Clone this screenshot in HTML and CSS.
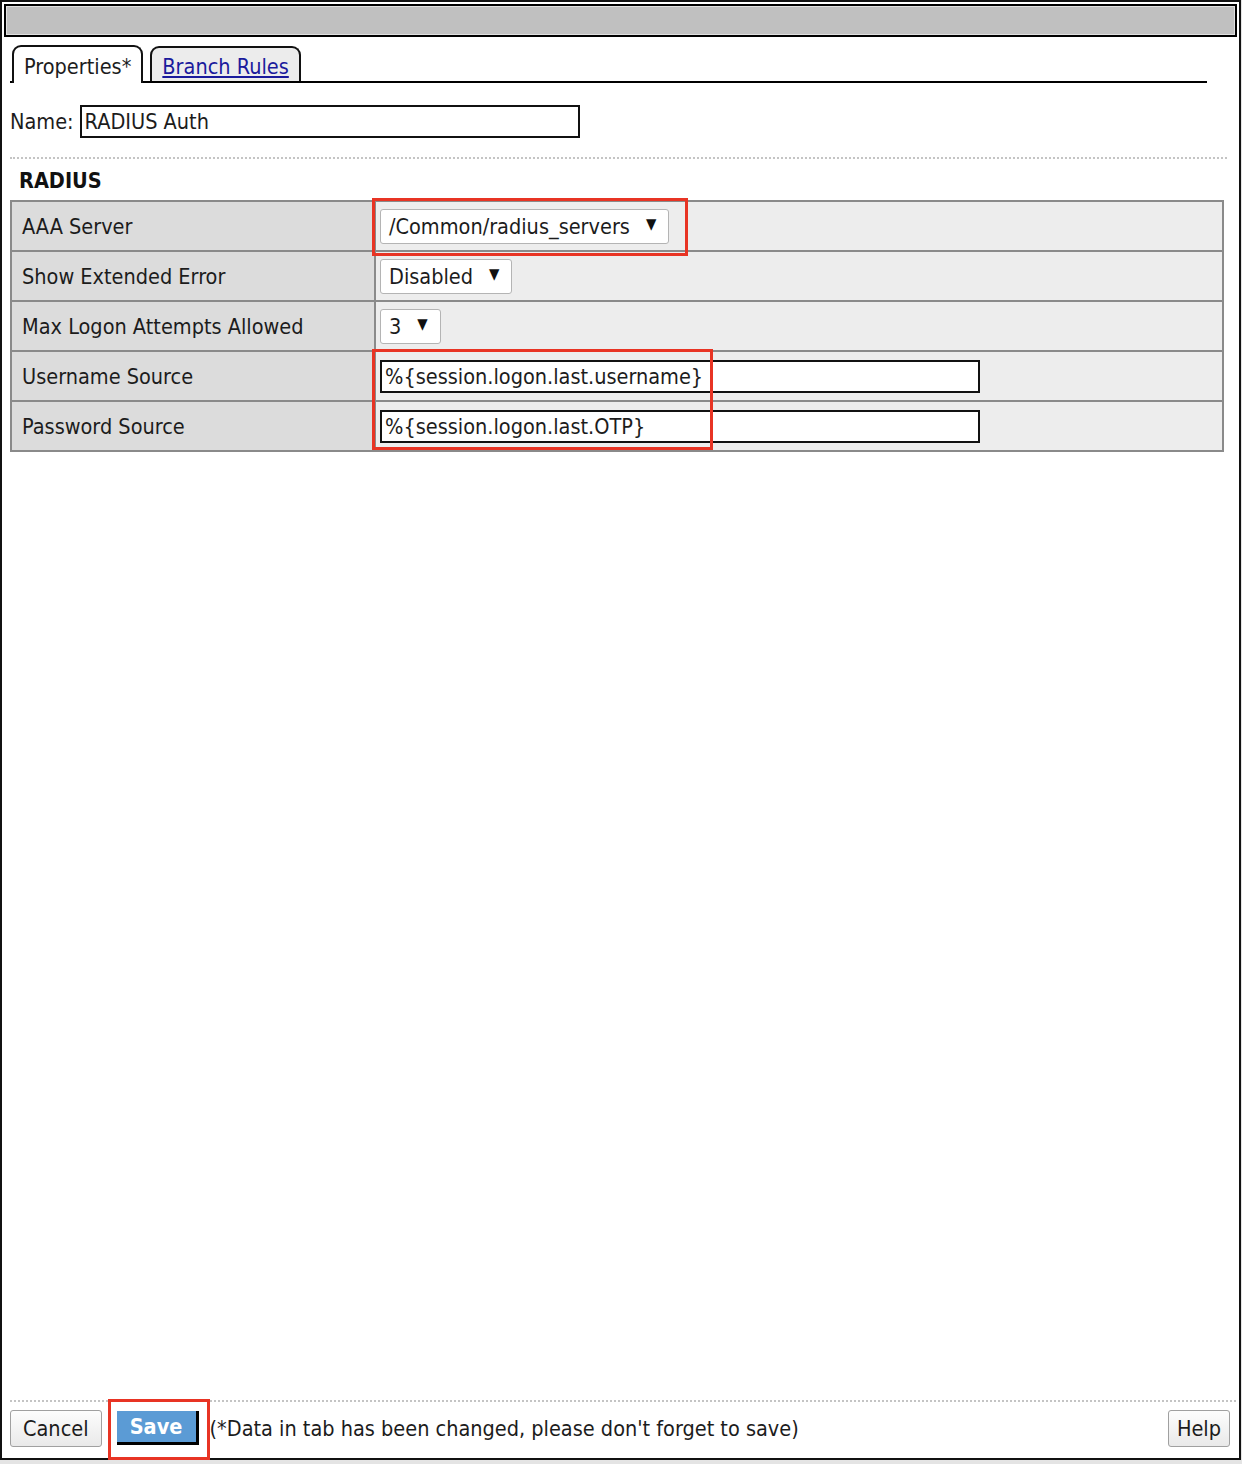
FILE: index.html
```html
<!DOCTYPE html>
<html lang="en">
<head>
    <meta charset="UTF-8">
    <title>RADIUS Auth - Properties</title>
    <link rel="stylesheet" href="styles.css">
</head>
<body>
    <div class="window">
        <div class="titlebar"></div>

        <div class="panel">
            <!-- Pestañas -->
            <div class="tabs">
                <span class="tab tab-active">Properties*</span>
                <span class="tab"><a href="#">Branch Rules</a></span>
            </div>

            <div class="name-row">
                <label for="name">Name:</label>
                <input type="text" id="name" class="text-field name-field" value="RADIUS Auth">
            </div>

            <div class="dotted"></div>

            <h2 class="section-title">RADIUS</h2>

            <div class="props-wrap">
                <table class="props">
                    <tr>
                        <td class="prop-label">AAA Server</td>
                        <td class="prop-value">
                            <span class="select-box">/Common/radius_servers <span class="arrow">&#9660;</span></span>
                        </td>
                    </tr>
                    <tr>
                        <td class="prop-label">Show Extended Error</td>
                        <td class="prop-value">
                            <span class="select-box">Disabled <span class="arrow">&#9660;</span></span>
                        </td>
                    </tr>
                    <tr>
                        <td class="prop-label">Max Logon Attempts Allowed</td>
                        <td class="prop-value">
                            <span class="select-box">3 <span class="arrow">&#9660;</span></span>
                        </td>
                    </tr>
                    <tr>
                        <td class="prop-label">Username Source</td>
                        <td class="prop-value">
                            <input type="text" class="text-field source-field" value="%{session.logon.last.username}">
                        </td>
                    </tr>
                    <tr>
                        <td class="prop-label">Password Source</td>
                        <td class="prop-value">
                            <input type="text" class="text-field source-field" value="%{session.logon.last.OTP}">
                        </td>
                    </tr>
                </table>
                <!-- Recuadros rojos de anotación -->
                <div class="mark mark-server"></div>
                <div class="mark mark-sources"></div>
            </div>
        </div>

        <div class="footer">
            <div class="dotted"></div>
            <div class="footer-row">
                <button class="btn">Cancel</button>
                <span class="save-wrap">
                    <button class="btn-save">Save</button>
                    <span class="mark mark-save"></span>
                </span>
                <span class="note">(*Data in tab has been changed, please don't forget to save)</span>
                <button class="btn btn-help">Help</button>
            </div>
        </div>
    </div>
</body>
</html>
```

FILE: styles.css
```css
body {
    font-family: 'DejaVu Sans Condensed', 'DejaVu Sans', sans-serif;
    font-size: 21.5px;
    color: #1c1c1c;
    background-color: #e4e4e4;
    margin: 0;
    padding: 0;
}

.window {
    width: 1237px;
    height: 1456px;
    background-color: #fff;
    border: 2px solid #111;
    display: flex;
    flex-direction: column;
}

.titlebar {
    height: 29px;
    margin: 2px 2px 0 2px;
    background-color: #c0c0c0;
    border: 2px solid #000;
    box-shadow: inset 0 0 0 1px #e0e0e0;
}

.panel {
    flex: 1;
    padding: 0 15px 0 8px;
}

/* Pestañas */
.tabs {
    display: flex;
    gap: 7px;
    margin-top: 8px;
    width: 1197px;
    height: 38px;
    border-bottom: 2px solid #000;
    padding-left: 2px;
    box-sizing: border-box;
    align-items: flex-end;
}

.tab {
    height: 35px;
    padding: 3px 10px 0 10px;
    border: 2px solid #111;
    border-bottom: none;
    border-radius: 9px 9px 0 0;
    background-color: #ececec;
    display: flex;
    align-items: center;
    box-sizing: border-box;
}

.tab-active {
    background-color: #fff;
    height: 38px;
    margin-bottom: -2px;
    padding-top: 2px;
}

.tab a {
    color: #1a1a9c;
    text-decoration: underline;
}

.name-row {
    display: flex;
    align-items: center;
    margin-top: 22px;
    gap: 6px;
}

.text-field {
    font-family: inherit;
    font-size: 21.5px;
    color: #1c1c1c;
    border: 2px solid #111;
    background-color: #fff;
    padding: 0 3px;
    box-sizing: border-box;
    height: 33px;
    outline: none;
}

.name-field {
    width: 500px;
}

.dotted {
    border-top: 2px dotted #c4c4c4;
    margin-top: 19px;
    width: 1217px;
}

.section-title {
    font-size: 21.5px;
    font-weight: bold;
    color: #111;
    margin: 10px 0 0 9px;
    height: 31px;
    line-height: 24px;
}

/* Tabla de propiedades */
.props-wrap {
    position: relative;
    width: 1214px;
}

.props {
    width: 100%;
    border-collapse: collapse;
    border: 2px solid #8a8a8a;
}

.props td {
    height: 48px;
    border: 2px solid #8a8a8a;
    padding: 0;
}

.prop-label {
    width: 352px;
    background-color: #dcdcdc;
    padding-left: 10px !important;
}

.prop-value {
    background-color: #ededed;
    padding-left: 4px !important;
}

.select-box {
    display: inline-flex;
    align-items: center;
    gap: 16px;
    background-color: #fff;
    border: 1px solid #b4b4b4;
    border-radius: 3px;
    height: 35px;
    padding: 0 12px 0 8px;
    box-sizing: border-box;
}

.arrow {
    font-size: 15px;
    margin-top: -4px;
    color: #111;
}

.source-field {
    width: 600px;
}

/* Recuadros rojos */
.mark {
    position: absolute;
    border: 3px solid #e83424;
    box-sizing: border-box;
}

.mark-server {
    left: 362px;
    top: -2px;
    width: 316px;
    height: 58px;
}

.mark-sources {
    left: 362px;
    top: 149px;
    width: 341px;
    height: 101px;
}

/* Pie */
.footer {
    padding: 0 0 6px 8px;
}

.footer .dotted {
    width: 1226px;
    margin-top: 0;
}

.footer-row {
    display: flex;
    align-items: center;
    height: 48px;
    margin-top: 2px;
}

.btn {
    font-family: inherit;
    font-size: 21.5px;
    color: #1c1c1c;
    height: 37px;
    padding: 0 12px;
    background: linear-gradient(#fdfdfd, #e9e9e9);
    border: 1px solid #a0a0a0;
    border-radius: 3px;
}

.save-wrap {
    position: relative;
    margin-left: 15px;
    display: inline-flex;
}

.btn-save {
    font-family: inherit;
    font-size: 21.5px;
    font-weight: bold;
    color: #fff;
    width: 82px;
    height: 34px;
    background-color: #5b9bd5;
    border: none;
    border-right: 3px solid #000;
    border-bottom: 3px solid #000;
    padding: 0;
}

.mark-save {
    left: -9px;
    top: -12px;
    width: 102px;
    height: 61px;
}

.note {
    margin-left: 11px;
    flex: 1;
}

.btn-help {
    padding: 0 8px;
    margin-right: 9px;
}
```
